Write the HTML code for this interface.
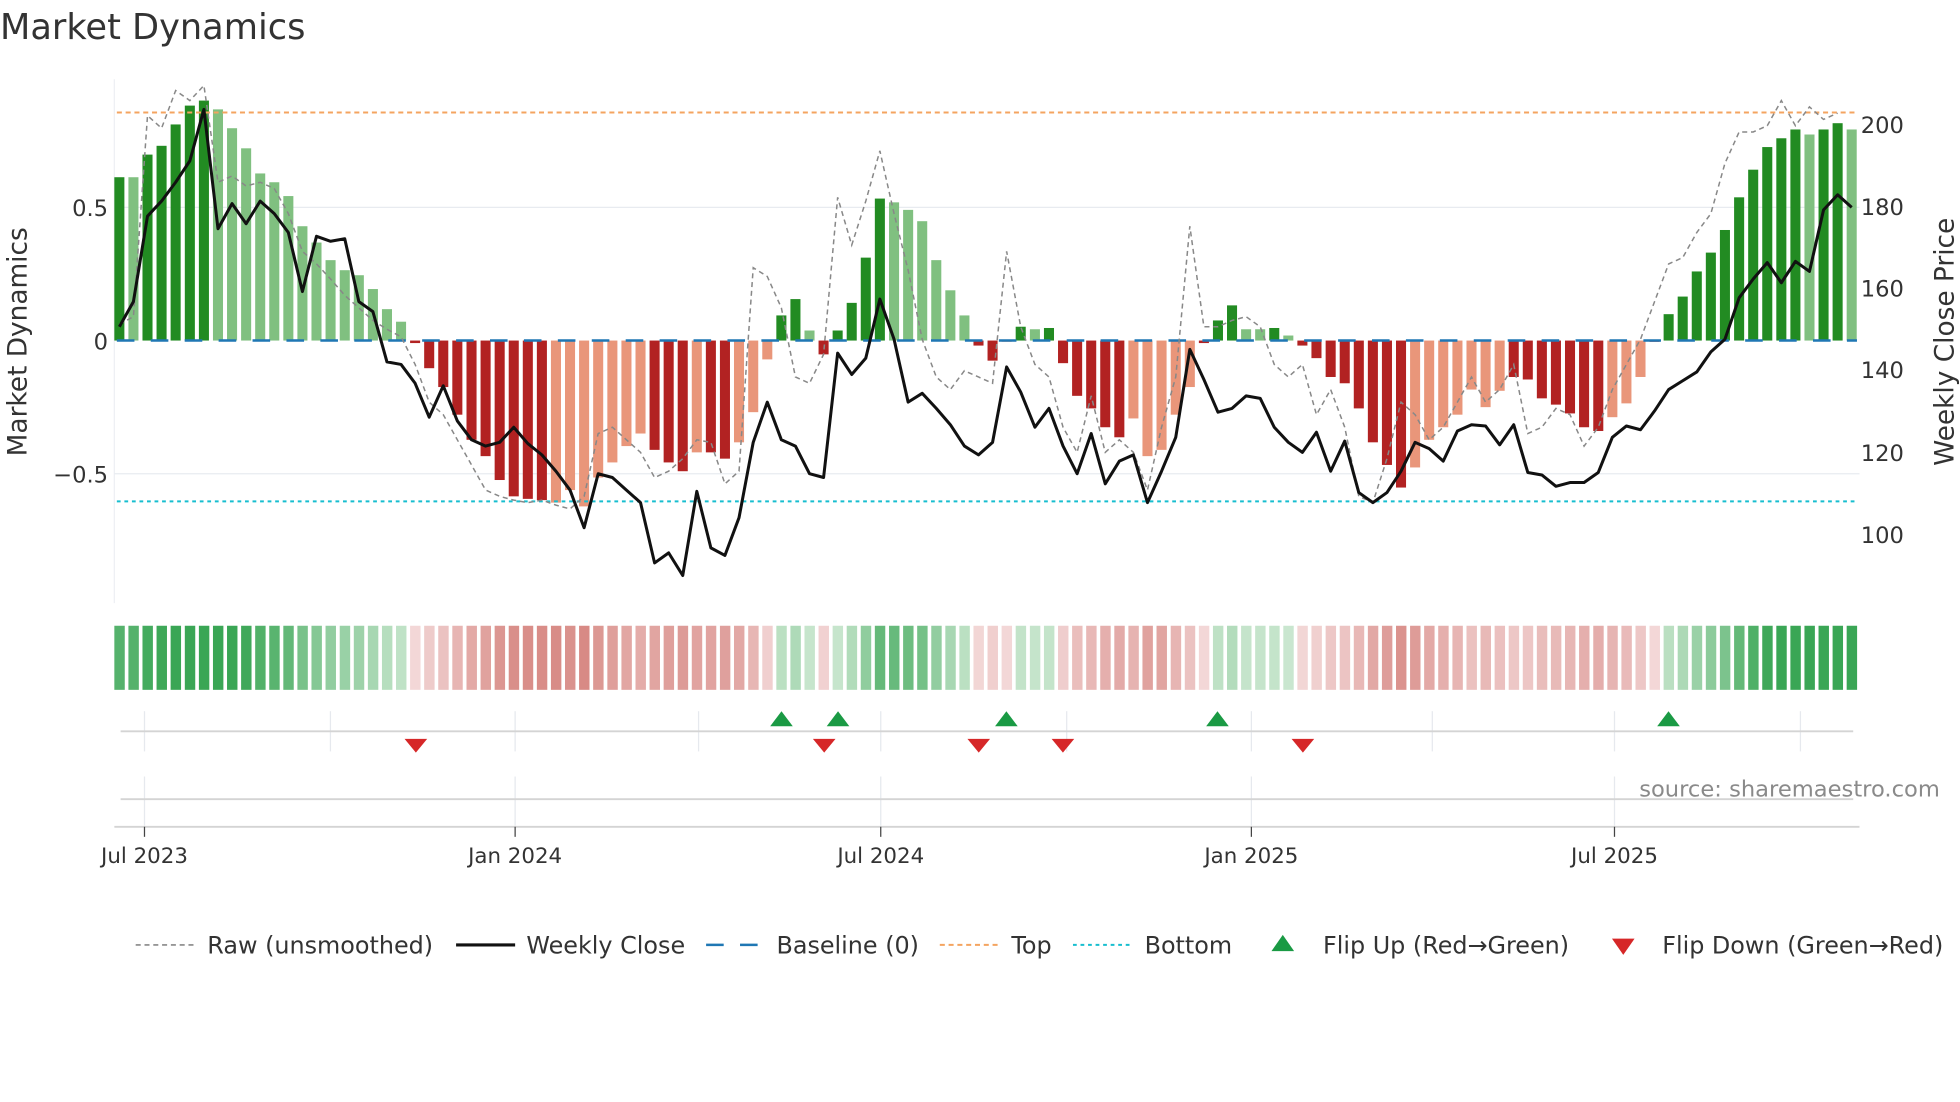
<!DOCTYPE html>
<html><head><meta charset="utf-8"><style>
html,body{margin:0;padding:0;background:#fff;width:1960px;height:1102px;overflow:hidden}
svg{display:block;font-family:"DejaVu Sans","Liberation Sans",sans-serif}
</style></head><body>
<svg id="s" width="1960" height="1102" viewBox="0 0 1560 877" xmlns="http://www.w3.org/2000/svg">
<text x="0" y="31" font-size="28" fill="#333">Market Dynamics</text>
<line x1="91" y1="63" x2="91" y2="480" stroke="#eef0f4" stroke-width="1"/>
<line x1="91" y1="165" x2="1480" y2="165" stroke="#e8ebf0" stroke-width="1"/>
<line x1="91" y1="377" x2="1480" y2="377" stroke="#e8ebf0" stroke-width="1"/>
<g id="bars"></g>
<line x1="93" y1="271" x2="1478" y2="271" stroke="#1f77b4" stroke-width="2" stroke-dasharray="14,13"/>
<line x1="93" y1="89.5" x2="1478" y2="89.5" stroke="#f4a460" stroke-width="1.6" stroke-dasharray="4,3"/>
<line x1="93" y1="399" x2="1478" y2="399" stroke="#17becf" stroke-width="1.6" stroke-dasharray="3,3"/>
<polyline id="raw" fill="none" stroke="#888" stroke-width="1.2" stroke-dasharray="4,3"/>
<polyline id="px" fill="none" stroke="#111" stroke-width="2.4" stroke-linejoin="round"/>
<g font-size="18" fill="#333" text-anchor="end">
<text x="86" y="172">0.5</text><text x="86" y="278">0</text><text x="86" y="384">−0.5</text>
</g>
<g font-size="18" fill="#333">
<text x="1481" y="106">200</text><text x="1481" y="171">180</text><text x="1481" y="236">160</text><text x="1481" y="301">140</text><text x="1481" y="367">120</text><text x="1481" y="432">100</text>
</g>
<text transform="translate(21,272) rotate(-90)" font-size="21" fill="#333" text-anchor="middle">Market Dynamics</text>
<text transform="translate(1555,272) rotate(-90)" font-size="21" fill="#333" text-anchor="middle">Weekly Close Price</text>
<g id="heat"></g>
<g stroke="#e6e9ee" stroke-width="1">
<line x1="115" y1="566" x2="115" y2="598"/><line x1="263" y1="566" x2="263" y2="598"/><line x1="410" y1="566" x2="410" y2="598"/><line x1="556" y1="566" x2="556" y2="598"/><line x1="701" y1="566" x2="701" y2="598"/><line x1="849" y1="566" x2="849" y2="598"/><line x1="996" y1="566" x2="996" y2="598"/><line x1="1140" y1="566" x2="1140" y2="598"/><line x1="1285" y1="566" x2="1285" y2="598"/><line x1="1433" y1="566" x2="1433" y2="598"/>
<line x1="115" y1="618" x2="115" y2="657"/><line x1="410" y1="618" x2="410" y2="657"/><line x1="701" y1="618" x2="701" y2="657"/><line x1="996" y1="618" x2="996" y2="657"/><line x1="1285" y1="618" x2="1285" y2="657"/>
</g>
<line x1="96" y1="582" x2="1475" y2="582" stroke="#d4d4d4" stroke-width="1.5"/>
<line x1="96" y1="636" x2="1475" y2="636" stroke="#d4d4d4" stroke-width="1.5"/>
<line x1="91" y1="658" x2="1480" y2="658" stroke="#d4d4d4" stroke-width="1.5"/>
<g fill="#1a9a44" id="up"></g>
<g fill="#d62728" id="dn"></g>
<text x="1544" y="634" font-size="18" fill="#8a8a8a" text-anchor="end">source: sharemaestro.com</text>
<g stroke="#444" stroke-width="1"><line x1="115" y1="658" x2="115" y2="666"/><line x1="410" y1="658" x2="410" y2="666"/><line x1="701" y1="658" x2="701" y2="666"/><line x1="996" y1="658" x2="996" y2="666"/><line x1="1285" y1="658" x2="1285" y2="666"/></g>
<g font-size="17" fill="#333" text-anchor="middle">
<text x="115" y="687">Jul 2023</text><text x="410" y="687">Jan 2024</text><text x="701" y="687">Jul 2024</text><text x="996" y="687">Jan 2025</text><text x="1285" y="687">Jul 2025</text>
</g>
<g font-size="19" fill="#333">
<line x1="108" y1="752" x2="154" y2="752" stroke="#888" stroke-width="1.3" stroke-dasharray="4,3"/>
<text x="165" y="759">Raw (unsmoothed)</text>
<line x1="363" y1="752" x2="410" y2="752" stroke="#111" stroke-width="2.5"/>
<text x="419" y="759">Weekly Close</text>
<line x1="562" y1="752" x2="607" y2="752" stroke="#1f77b4" stroke-width="2" stroke-dasharray="14,13"/>
<text x="618" y="759">Baseline (0)</text>
<line x1="748" y1="752" x2="794" y2="752" stroke="#f4a460" stroke-width="1.6" stroke-dasharray="4,3"/>
<text x="805" y="759">Top</text>
<line x1="854" y1="752" x2="900" y2="752" stroke="#17becf" stroke-width="1.6" stroke-dasharray="3,3"/>
<text x="911" y="759">Bottom</text>
<polygon points="1012,757 1030,757 1021,744" fill="#1a9a44"/>
<text x="1053" y="759">Flip Up (Red→Green)</text>
<polygon points="1283,747 1301,747 1292,760" fill="#d62728"/>
<text x="1323" y="759">Flip Down (Green→Red)</text>
</g>
</svg>
<script>
var tops=[141,141,123,116,99,84,80,87,102,118,138,145,156,180,193,207,215,219,230,246,256,273,293,308,330,350,363,382,395,397,398,400,390,403,380,368,355,345,358,368,375,360,360,365,352,328,286,251,238,263,282,263,241,205,158,161,167,176,207,231,251,275,287,272,260,262,261,289,315,325,340,348,333,363,358,330,308,273,255,243,262,262,261,267,275,285,300,305,325,352,370,388,372,350,340,330,310,324,311,300,302,317,322,329,340,343,332,321,300,272,250,236,216,201,183,157,135,117,110,103,107,103,98,103];
var dark=[1,0,1,1,1,1,1,0,0,0,0,0,0,0,0,0,0,0,0,0,0,1,1,1,1,1,1,1,1,1,1,0,0,0,0,0,0,0,1,1,1,0,1,1,0,0,0,1,1,0,1,1,1,1,1,0,0,0,0,0,0,1,1,0,1,0,1,1,1,1,1,1,0,0,0,0,0,1,1,1,0,0,1,0,1,1,1,1,1,1,1,1,0,0,0,0,0,0,0,1,1,1,1,1,1,1,0,0,0,1,1,1,1,1,1,1,1,1,1,1,0,1,1,0];
var bars='',heat='',step=11.21,x0=91;
for(var i=0;i<tops.length;i++){
 var x=x0+i*step,t=tops[i],v=(271-t)/212,c;
 if(t<271){c=dark[i]?'#228b22':'#80c080';bars+='<rect x="'+x.toFixed(1)+'" y="'+t+'" width="8" height="'+(271-t)+'" fill="'+c+'"/>';}
 else if(t>271){c=dark[i]?'#b22222':'#e9967a';bars+='<rect x="'+x.toFixed(1)+'" y="271" width="8" height="'+(t-271)+'" fill="'+c+'"/>';}
 var a=Math.min(1,Math.abs(v)/0.75);
 var col;
 if(v>=0){col='rgb('+Math.round(205-147*a)+','+Math.round(232-66*a)+','+Math.round(210-125*a)+')';}
 else{col='rgb('+Math.round(243-33*a)+','+Math.round(216-94*a)+','+Math.round(216-100*a)+')';}
 heat+='<rect x="'+x.toFixed(1)+'" y="498" width="8.3" height="51" fill="'+col+'"/>';
}
document.getElementById('bars').innerHTML=bars;
document.getElementById('heat').innerHTML=heat;
var p=[260,240,172,160,145,128,87,182,162,178,160,170,185,232,188,192,190,240,248,288,290,305,332,307,335,350,355,352,340,353,362,375,390,420,377,380,390,400,448,440,458,391,436,442,412,352,320,350,355,377,380,281,298,285,238,270,320,313,325,338,355,362,352,292,312,340,325,355,377,345,385,367,362,400,375,348,278,302,328,325,315,317,340,352,360,344,375,351,392,400,392,375,352,357,367,343,338,339,354,338,376,378,387,384,384,376,348,339,342,327,310,303,296,280,270,237,222,209,225,208,216,167,155,165];
var raw=[258,252,92,102,72,80,68,145,140,148,145,150,170,200,210,222,235,245,255,262,268,290,320,330,350,370,390,395,398,400,398,402,405,395,345,340,350,360,380,375,365,350,352,385,375,213,220,245,300,305,282,157,195,160,120,170,215,270,300,310,295,300,305,200,260,290,300,340,360,315,360,350,360,390,340,300,180,260,260,255,252,260,290,300,290,330,310,340,395,400,365,320,330,350,340,320,300,320,310,290,345,340,325,330,355,340,310,290,270,240,210,205,185,170,130,105,105,100,80,100,85,95,90];
function pts(a){return a.map(function(y,i){return (x0+4+i*step).toFixed(1)+','+y}).join(' ');}
document.getElementById('px').setAttribute('points',pts(p));
document.getElementById('raw').setAttribute('points',pts(raw));
var up=[622,667,801,969,1328],dn=[331,656,779,846,1037],u='',d='';
up.forEach(function(x){u+='<polygon points="'+(x-9)+',578 '+(x+9)+',578 '+x+',566"/>';});
dn.forEach(function(x){d+='<polygon points="'+(x-9)+',588 '+(x+9)+',588 '+x+',599"/>';});
document.getElementById('up').innerHTML=u;document.getElementById('dn').innerHTML=d;
</script>
</body></html>
